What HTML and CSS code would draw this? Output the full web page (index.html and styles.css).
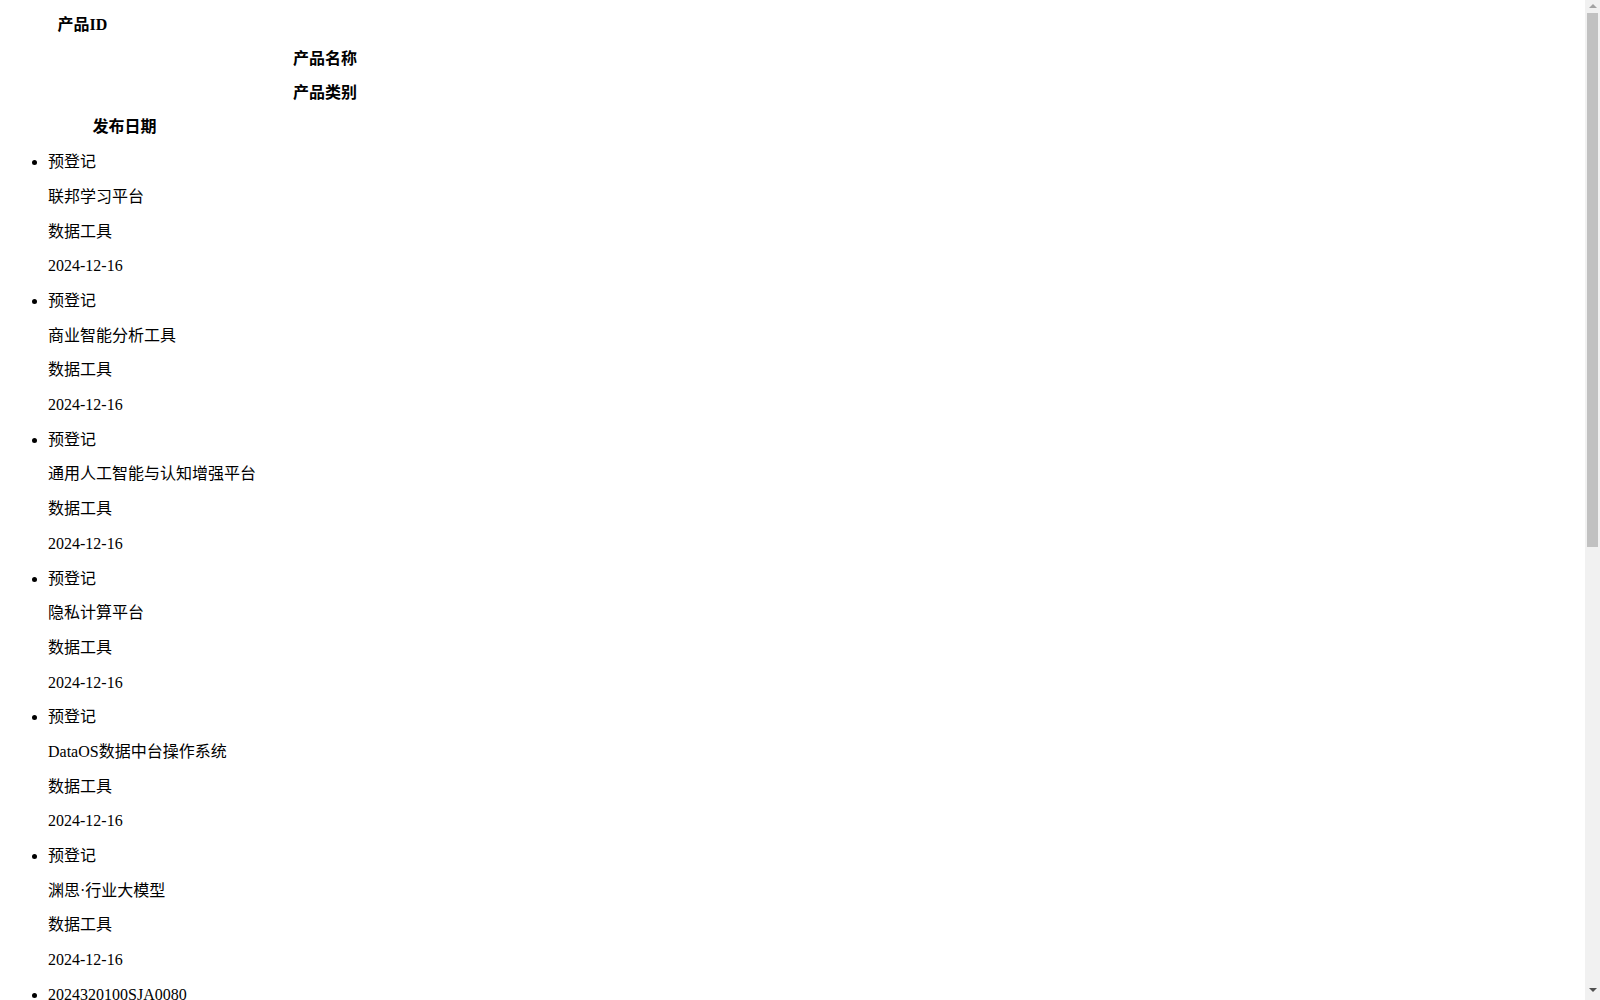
FILE: index.html
```html
<!DOCTYPE html>
<html lang="zh-CN">
<head>
<meta charset="utf-8">
<title>产品列表</title>
<link rel="stylesheet" href="styles.css">
</head>
<body class="page">
<div class="head">
  <div class="th th-id">产品ID</div>
  <div class="th th-name">产品名称</div>
  <div class="th th-name">产品类别</div>
  <div class="th th-date">发布日期</div>
</div>
<ul class="list">
  <li class="item"><p class="cell">预登记</p><p class="cell">联邦学习平台</p><p class="cell">数据工具</p><p class="cell">2024-12-16</p></li>
  <li class="item"><p class="cell">预登记</p><p class="cell">商业智能分析工具</p><p class="cell">数据工具</p><p class="cell">2024-12-16</p></li>
  <li class="item"><p class="cell">预登记</p><p class="cell">通用人工智能与认知增强平台</p><p class="cell">数据工具</p><p class="cell">2024-12-16</p></li>
  <li class="item"><p class="cell">预登记</p><p class="cell">隐私计算平台</p><p class="cell">数据工具</p><p class="cell">2024-12-16</p></li>
  <li class="item"><p class="cell">预登记</p><p class="cell">DataOS数据中台操作系统</p><p class="cell">数据工具</p><p class="cell">2024-12-16</p></li>
  <li class="item"><p class="cell">预登记</p><p class="cell">渊思·行业大模型</p><p class="cell">数据工具</p><p class="cell">2024-12-16</p></li>
  <li class="item"><p class="cell">2024320100SJA0080</p><p class="cell">数据资产管理平台</p><p class="cell">数据工具</p><p class="cell">2024-12-13</p></li>
  <li class="item"><p class="cell">2024320100SJA0079</p><p class="cell">数据治理平台</p><p class="cell">数据工具</p><p class="cell">2024-12-13</p></li>
  <li class="item"><p class="cell">2024320100SJA0078</p><p class="cell">数据安全检测系统</p><p class="cell">数据工具</p><p class="cell">2024-12-13</p></li>
  <li class="item"><p class="cell">2024320100SJA0077</p><p class="cell">智能数据标注平台</p><p class="cell">数据工具</p><p class="cell">2024-12-12</p></li>
  <li class="item"><p class="cell">2024320100SJA0076</p><p class="cell">数据交易服务平台</p><p class="cell">数据工具</p><p class="cell">2024-12-12</p></li>
  <li class="item"><p class="cell">2024320100SJA0075</p><p class="cell">企业数据仓库系统</p><p class="cell">数据工具</p><p class="cell">2024-12-11</p></li>
</ul>
<div class="scrollbar" aria-hidden="true">
  <div class="sb-btn"><span class="arrow-up"></span></div>
  <div class="sb-thumb"></div>
  <div class="sb-rest"></div>
  <div class="sb-btn sb-btn-down"><span class="arrow-down"></span></div>
</div>
</body>
</html>
```

FILE: styles.css
```css
.page {
  margin: 8px;
  font-family: "Liberation Serif", "Noto Sans CJK SC", serif;
  font-size: 16px;
  color: #000;
  background: #fff;
}

.head {
  padding-top: 7.8px;
}

.th {
  font-weight: bold;
  text-align: center;
  line-height: 18px;
  height: 18px;
  margin-bottom: 16px;
}

.th-id {
  width: 149px;
}

.th-name {
  width: 634px;
}

.th-date {
  width: 233px;
  margin-bottom: 0;
}

.list {
  margin: 17.5px 0 16px;
  padding-left: 40px;
  list-style: disc;
}

.item {
  margin: 0;
}

.cell {
  margin: 0 0 16px;
  line-height: 18.7px;
  height: 18.7px;
}

/* fake browser scrollbar overlay */
.scrollbar {
  position: fixed;
  top: 0;
  right: 0;
  width: 15px;
  height: 100vh;
  background: #f1f1f1;
  display: flex;
  flex-direction: column;
  align-items: center;
}

.sb-btn {
  height: 13px;
  width: 15px;
  flex: none;
  display: flex;
  align-items: center;
  justify-content: center;
}

.sb-btn-down {
  height: 15px;
  align-items: flex-start;
  padding-top: 3px;
  box-sizing: border-box;
}

.arrow-up {
  width: 0;
  height: 0;
  border-left: 4px solid transparent;
  border-right: 4px solid transparent;
  border-bottom: 4px solid #a3a3a3;
  margin-top: -2px;
}

.arrow-down {
  width: 0;
  height: 0;
  border-left: 4px solid transparent;
  border-right: 4px solid transparent;
  border-top: 4px solid #505050;
}

.sb-thumb {
  width: 11px;
  height: 534px;
  background: #c1c1c1;
  flex: none;
}

.sb-rest {
  flex: 1;
}
```
